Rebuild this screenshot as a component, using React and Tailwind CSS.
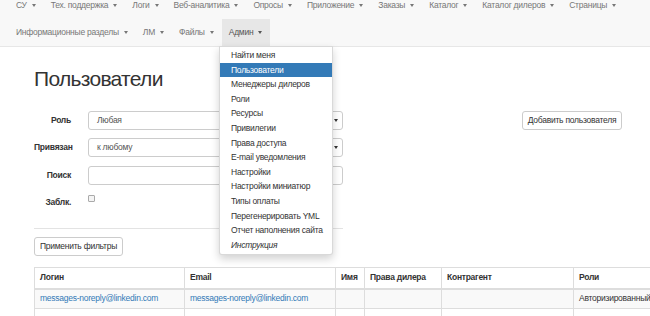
import React from "react";

const topNav = [
  "СУ",
  "Тех. поддержка",
  "Логи",
  "Веб-аналитика",
  "Опросы",
  "Приложение",
  "Заказы",
  "Каталог",
  "Каталог дилеров",
  "Страницы",
];
const bottomNav = ["Информационные разделы", "ЛМ", "Файлы", "Админ"];

const adminMenu = [
  "Найти меня",
  "Пользователи",
  "Менеджеры дилеров",
  "Роли",
  "Ресурсы",
  "Привилегии",
  "Права доступа",
  "E-mail уведомления",
  "Настройки",
  "Настройки миниатюр",
  "Типы оплаты",
  "Перегенерировать YML",
  "Отчет наполнения сайта",
  "Инструкция",
];

const Caret = () => (
  <span className="ml-[5px] inline-block border-t-[3px] border-x-[2.5px] border-x-transparent border-t-current" />
);

const NavItem = ({ label, active }) => (
  <div
    className={`h-[27px] flex items-center whitespace-nowrap pl-[7px] pr-[8px] ${
      active ? "bg-[#e7e7e7] text-[#555]" : "text-[#777]"
    }`}
  >
    {label}
    <Caret />
  </div>
);

const SelectBox = ({ value }) => (
  <div className="ml-[17px] w-[255px] h-[19px] border border-[#ccc] rounded-[3px] bg-white flex items-center pl-[8px] pr-[4px] text-[#555]">
    <span className="flex-1">{value}</span>
    <span className="inline-block border-t-[3px] border-x-[2px] border-x-transparent border-t-[#333]" />
  </div>
);

export default function App() {
  return (
    <div className="w-[650px] h-[316px] overflow-hidden relative bg-white text-[8.5px] tracking-[-0.25px] text-[#333] font-['Liberation_Sans',Arial,sans-serif]">
      {/* navbar */}
      <div className="h-[47px] flex flex-col bg-[#f8f8f8] border-b border-[#e7e7e7] pl-[9px]">
        <div className="flex -mt-[8px]">
          {topNav.map((n) => (
            <NavItem key={n} label={n} />
          ))}
        </div>
        <div className="flex">
          {bottomNav.map((n) => (
            <NavItem key={n} label={n} active={n === "Админ"} />
          ))}
        </div>
      </div>

      <div className="pl-[34px]">
        <h1 className="mt-[19px] text-[21px] tracking-[-0.7px] leading-[25px] text-[#333]">Пользователи</h1>

        <div className="mt-[20px] flex items-start">
          <div className="w-[309px]">
            <div className="flex items-center">
              <label className="w-[37px] text-right font-bold">Роль</label>
              <SelectBox value="Любая" />
            </div>
            <div className="flex items-center mt-[8px]">
              <label className="w-[37px] text-right font-bold">Привязан</label>
              <SelectBox value="к любому" />
            </div>
            <div className="flex items-center mt-[9px]">
              <label className="w-[37px] text-right font-bold">Поиск</label>
              <div className="ml-[17px] w-[255px] h-[19px] border border-[#ccc] rounded-[3px] bg-white" />
            </div>
            <div className="flex items-start mt-[8px]">
              <label className="w-[37px] text-right font-bold leading-[19px]">Заблк.</label>
              <span className="ml-[17px] mt-[2px] w-[7px] h-[7px] border border-[#aaa] rounded-[1px] bg-[#f4f4f4]" />
            </div>
          </div>
          <button className="ml-[179px] h-[19px] w-[100px] border border-[#ccc] rounded-[3px] bg-white text-[#333]">
            Добавить пользователя
          </button>
        </div>

        <div className="mt-[16px] w-[309px] border-t border-[#e3e3e3]" />

        <button className="mt-[8px] h-[19px] w-[89px] border border-[#ccc] rounded-[3px] bg-white text-[#333]">
          Применить фильтры
        </button>

        <table className="mt-[11px] w-[650px] table-fixed border-collapse">
          <colgroup>
            <col className="w-[150px]" />
            <col className="w-[151px]" />
            <col className="w-[29px]" />
            <col className="w-[77px]" />
            <col className="w-[132px]" />
            <col />
          </colgroup>
          <thead>
            <tr className="h-[21px] font-bold text-left">
              {["Логин", "Email", "Имя", "Права дилера", "Контрагент", "Роли"].map((h) => (
                <th key={h} className="border border-[#ddd] border-b-2 px-[5px] text-left">
                  {h}
                </th>
              ))}
            </tr>
          </thead>
          <tbody>
            <tr className="h-[20px] bg-[#f9f9f9]">
              <td className="border border-[#ddd] px-[5px] text-[#337ab7]">messages-noreply@linkedin.com</td>
              <td className="border border-[#ddd] px-[5px] text-[#337ab7]">messages-noreply@linkedin.com</td>
              <td className="border border-[#ddd]" />
              <td className="border border-[#ddd]" />
              <td className="border border-[#ddd]" />
              <td className="border border-[#ddd] px-[5px] whitespace-nowrap">Авторизированный</td>
            </tr>
            <tr className="h-[20px]">
              <td className="border border-[#ddd]" />
              <td className="border border-[#ddd]" />
              <td className="border border-[#ddd]" />
              <td className="border border-[#ddd]" />
              <td className="border border-[#ddd]" />
              <td className="border border-[#ddd]" />
            </tr>
          </tbody>
        </table>
      </div>

      {/* admin dropdown */}
      <div className="absolute left-[219px] top-[46px] w-[114px] h-[209px] bg-white border border-[rgba(0,0,0,0.15)] rounded-b-[3px] shadow-[0_4px_8px_rgba(0,0,0,0.18)] pt-[1px]">
        {adminMenu.map((m) => (
          <div
            key={m}
            className={`h-[14.6px] leading-[14.6px] pl-[11px] whitespace-nowrap ${
              m === "Пользователи" ? "bg-[#337ab7] text-white" : "text-[#333]"
            } ${m === "Инструкция" ? "italic" : ""}`}
          >
            {m}
          </div>
        ))}
      </div>
    </div>
  );
}
